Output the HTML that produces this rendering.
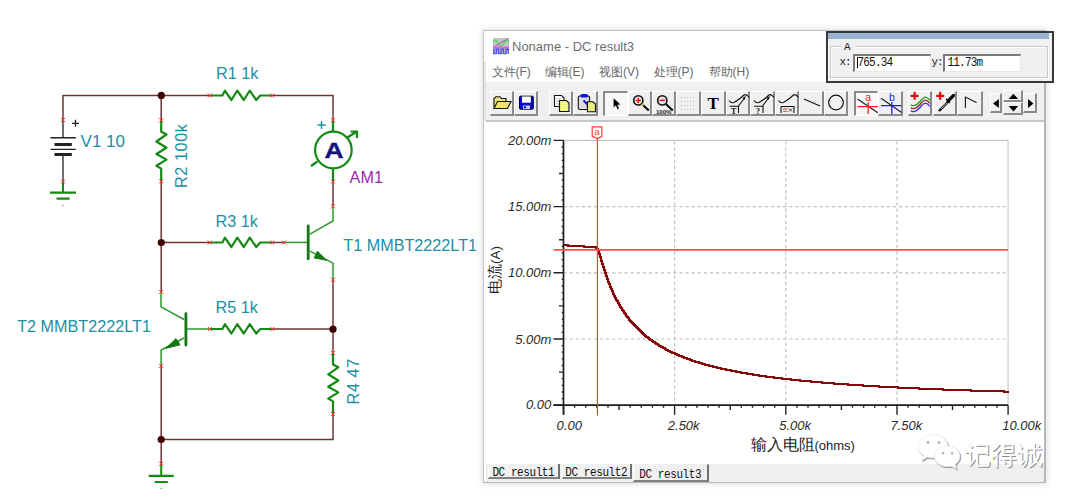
<!DOCTYPE html>
<html><head><meta charset="utf-8">
<style>
html,body{margin:0;padding:0;}
body{width:1080px;height:502px;background:#fff;position:relative;overflow:hidden;font-family:"Liberation Sans",sans-serif;}
.abs{position:absolute;}
svg{position:absolute;left:0;top:0;}
.lbl{font-family:"Liberation Sans",sans-serif;font-size:16.2px;fill:#1b8fa3;}
.btn{position:absolute;top:90.6px;height:25px;box-sizing:border-box;background:#f0f0f0;border-top:1px solid #fff;border-left:1px solid #fff;border-right:2px solid #8a8a8a;border-bottom:2px solid #8a8a8a;}
.btn.p{background:#f7f7f7;border-top:2px solid #8a8a8a;border-left:2px solid #8a8a8a;border-right:1px solid #fff;border-bottom:1px solid #fff;}
.menu{position:absolute;top:64px;font-size:12px;color:#686868;white-space:nowrap;}
.mono{font-family:"Liberation Mono",monospace;}
.tab{position:absolute;top:463.8px;height:15.5px;box-sizing:border-box;background:#f0f0f0;border-left:1px solid #fff;border-right:2px solid #707070;border-bottom:2px solid #808080;font-family:"Liberation Mono",monospace;font-size:11px;letter-spacing:-0.42px;color:#111;padding-left:3px;line-height:13px;padding-top:3.3px;white-space:nowrap;}
.tab span{display:inline-block;transform:scaleY(1.12);transform-origin:0 70%;}
.tab.sel{height:17.8px;padding-top:5.6px;padding-left:5px;border-top:none;border-top-right-radius:2px;}
.tb{position:absolute;top:53.7px;width:77.7px;height:18px;box-sizing:border-box;background:#fff;border-top:2px solid #7a7a7a;border-left:2px solid #7a7a7a;border-bottom:1px solid #e8e8e8;border-right:1px solid #e8e8e8;font-family:"Liberation Mono",monospace;font-size:11px;letter-spacing:-0.8px;color:#111;padding-left:2.5px;line-height:14px;}
.tb span{display:inline-block;transform:scaleY(1.12);transform-origin:0 70%;}
</style></head><body>

<!-- SCHEMATIC -->
<svg width="1080" height="502" viewBox="0 0 1080 502">
 <g fill="none" stroke="#6d3434" stroke-width="1.5">
  <path d="M63,120 L63,95.5 L209.7,95.5 M272.2,95.5 L333,95.5 L333,120.3"/>
  <path d="M161.2,95.5 L161.2,120.3 M161.2,181.3 L161.2,292 M161.2,242.5 L209.7,242.5"/>
  <path d="M272.2,242.5 L284.2,242.5"/>
  <path d="M333,181.5 L333,206.3 M333,279.7 L333,353.1 M272.2,329 L333,329"/>
  <path d="M333,414.1 L333,439.5 L161.2,439.5 M161.2,365.8 L161.2,464"/>
 </g>
 <!-- battery V1 -->
 <g stroke="#222" fill="none">
  <path d="M63,120 L63,138 M63,154 L63,181.5" stroke-width="1.3"/>
  <path d="M50.5,137.8 L75.8,137.8 M50.5,149.4 L75.8,149.4" stroke-width="1.4"/>
  <path d="M54.5,144.4 L71.8,144.4 M54.5,154.4 L71.8,154.4" stroke-width="3"/>
  <path d="M72,123.3 L79,123.3 M75.5,119.8 L75.5,126.8" stroke-width="1.3"/>
 </g>
 <!-- grounds -->
 <g stroke="#148a14" fill="none">
  <path d="M63,181.5 L63,192.7 M161.2,464 L161.2,475.8" stroke-width="2"/>
  <path d="M50,192.7 L76,192.7 M56.5,198.7 L69.7,198.7 M148.7,475.8 L173.8,475.8 M154.7,482 L167.8,482" stroke-width="2.2"/>
  <path d="M63,205 L63,206 M161.2,488 L161.2,489" stroke-width="1"/>
 </g>
 <!-- resistors -->
 <g fill="none" stroke="#148a14" stroke-width="2.2" stroke-linejoin="round">
  <path d="M209.7,95.5 L222.4,95.5 L224.9,90.7 L231.4,100.0 L237.3,90.7 L243.8,100.0 L249.8,90.7 L256.3,100.0 L260.2,95.5 L272.2,95.5"/>
  <path d="M209.7,242.5 L222.4,242.5 L224.9,237.7 L231.4,247.0 L237.3,237.7 L243.8,247.0 L249.8,237.7 L256.3,247.0 L260.2,242.5 L272.2,242.5"/>
  <path d="M209.7,329.0 L222.4,329.0 L224.9,324.2 L231.4,333.5 L237.3,324.2 L243.8,333.5 L249.8,324.2 L256.3,333.5 L260.2,329.0 L272.2,329.0"/>
  <path d="M161.2,120.3 L161.2,131.7 L166.5,134.5 L156.4,141.5 L166.5,147.7 L156.4,154.0 L166.5,159.6 L156.4,165.8 L161.2,168.6 L161.2,181.3"/>
  <path d="M333.0,353.1 L333.0,364.5 L338.3,367.3 L328.2,374.3 L338.3,380.5 L328.2,386.8 L338.3,392.4 L328.2,398.6 L333.0,401.4 L333.0,414.1"/>
 </g>
 <!-- ammeter -->
 <g fill="none" stroke="#148a14" stroke-width="2.2">
  <path d="M333,120.3 L333,131.5 M333,168.3 L333,181.5"/>
  <circle cx="333.4" cy="150" r="18.3"/>
  <path d="M346.5,138 L357,131.5 M350.5,131.5 L357,131.5 L357,138 M317.5,161.5 L311,166"/>
 </g>
 <text transform="translate(334,158.3) scale(1.2,1.02)" text-anchor="middle" style="font-family:'Liberation Sans',sans-serif;font-weight:bold;font-size:22px;fill:#141478;stroke:#141478;stroke-width:0.4px">A</text>
 <path d="M317.5,125 L325.5,125 M321.5,121 L321.5,129" stroke="#1b8fa3" stroke-width="1.4"/>
 <!-- transistor T1 -->
 <g fill="none" stroke="#2a9a2a" stroke-width="1.5">
  <path d="M284.2,242.4 L308,242.4"/>
  <path d="M333,206.3 L333,221 L309.9,234.2"/>
  <path d="M309.9,251.2 L333,263.2 L333,279.7"/>
 </g>
 <path d="M308.2,226 L308.2,258.8" stroke="#137813" stroke-width="2.8" stroke-linecap="round"/>
 <path d="M317.5,251.2 L314.2,257.9 L326.5,260.2 Z" fill="#137813" stroke="#137813" stroke-width="1"/>
 <!-- transistor T2 -->
 <g fill="none" stroke="#2a9a2a" stroke-width="1.5">
  <path d="M186,329 L209.8,329"/>
  <path d="M161,291.8 L161,306.9 L184.1,319.5"/>
  <path d="M184.1,338 L161.1,350 L161.1,365.8"/>
 </g>
 <path d="M185.9,313.7 L185.9,345.1" stroke="#137813" stroke-width="2.8" stroke-linecap="round"/>
 <path d="M176,338.6 L180,344.8 L165.8,348.4 Z" fill="#137813" stroke="#137813" stroke-width="1"/>
 <!-- junction dots -->
 <g fill="#3a0202">
  <circle cx="161.3" cy="95.4" r="3.6"/>
  <circle cx="161.3" cy="242.5" r="3.6"/>
  <circle cx="333" cy="329.2" r="3.6"/>
  <circle cx="161.2" cy="439.5" r="3.6"/>
 </g>
 <!-- red x marks -->
 <path stroke="#ff2a2a" stroke-width="1" d="M61.0,118.0 L65.0,122.0 M61.0,122.0 L65.0,118.0 M61.0,179.5 L65.0,183.5 M61.0,183.5 L65.0,179.5 M159.2,118.3 L163.2,122.3 M159.2,122.3 L163.2,118.3 M159.2,179.3 L163.2,183.3 M159.2,183.3 L163.2,179.3 M207.7,93.5 L211.7,97.5 M207.7,97.5 L211.7,93.5 M270.2,93.5 L274.2,97.5 M270.2,97.5 L274.2,93.5 M331.0,118.3 L335.0,122.3 M331.0,122.3 L335.0,118.3 M331.0,179.5 L335.0,183.5 M331.0,183.5 L335.0,179.5 M207.7,240.5 L211.7,244.5 M207.7,244.5 L211.7,240.5 M270.2,240.5 L274.2,244.5 M270.2,244.5 L274.2,240.5 M282.2,240.5 L286.2,244.5 M282.2,244.5 L286.2,240.5 M331.0,204.3 L335.0,208.3 M331.0,208.3 L335.0,204.3 M331.0,277.7 L335.0,281.7 M331.0,281.7 L335.0,277.7 M159.1,289.8 L163.1,293.8 M159.1,293.8 L163.1,289.8 M159.1,363.8 L163.1,367.8 M159.1,367.8 L163.1,363.8 M207.8,327.0 L211.8,331.0 M207.8,331.0 L211.8,327.0 M270.2,327.0 L274.2,331.0 M270.2,331.0 L274.2,327.0 M331.0,351.1 L335.0,355.1 M331.0,355.1 L335.0,351.1 M331.0,412.1 L335.0,416.1 M331.0,416.1 L335.0,412.1 M159.2,461.8 L163.2,465.8 M159.2,465.8 L163.2,461.8"/>
 <!-- labels -->
 <text class="lbl" x="80.6" y="146.7" style="font-size:17px">V1 10</text>
 <text class="lbl" x="216.1" y="79.4">R1 1k</text>
 <text class="lbl" x="215.5" y="226.8">R3 1k</text>
 <text class="lbl" x="215.5" y="312.7">R5 1k</text>
 <text class="lbl" x="343.3" y="250.8">T1 MMBT2222LT1</text>
 <text class="lbl" x="17.2" y="331.6">T2 MMBT2222LT1</text>
 <text class="lbl" x="349.6" y="182.6" style="fill:#9a2aa8">AM1</text>
 <text class="lbl" transform="translate(187.2,188) rotate(-90)" style="letter-spacing:0.6px">R2 100k</text>
 <text class="lbl" transform="translate(359.2,404.4) rotate(-90)" style="letter-spacing:0.6px">R4 47</text>
</svg>


<!-- WINDOW -->
<div class="abs" style="left:483px;top:30px;width:563px;height:453px;box-shadow:0 0 6px 1px rgba(0,0,0,0.13);"></div>
<div class="abs" style="left:483px;top:30px;width:563px;height:453px;box-sizing:border-box;border:1px solid #c2c2c2;border-right:2px solid #b8b8b8;border-bottom:1px solid #b8b8b8;background:#fff;"></div>
<div class="abs" style="left:484px;top:62px;width:2px;height:59px;background:#e6e6e6;"></div>
<!-- title icon -->
<svg width="1080" height="502" viewBox="0 0 1080 502" style="pointer-events:none">
 <rect x="493" y="38" width="16" height="16" fill="#c4c4c4"/>
 <path d="M493.3,41.8 Q495,38.8 497,41.5 Q499.5,46.5 501,45.8 Q503,45 505.5,41.5 Q507.5,39 508.8,42" fill="none" stroke="#5ada5a" stroke-width="1.5"/>
 <path d="M493.3,47 L508.7,38.3" fill="none" stroke="#a040b0" stroke-width="1.1" stroke-dasharray="1 0.6"/>
 <rect x="493" y="46.5" width="16" height="2" fill="#e060e0"/>
 <path d="M493.8,48.5 L493.8,53.6 L496.3,53.6 L496.3,49.2 L498.6,49.2 L498.6,53.6 L501.1,53.6 L501.1,49.2 L503.4,49.2 L503.4,53.6 L505.9,53.6 L505.9,49.2 L508.3,49.2 L508.3,53.6" fill="none" stroke="#5050f0" stroke-width="1.4"/>
</svg>
<div class="abs" style="left:512px;top:38.5px;font-size:13px;color:#6e6e6e;white-space:nowrap;">Noname - DC result3</div>
<!-- menu -->
<div class="menu" style="left:491.5px;">文件(F)</div>
<div class="menu" style="left:544.6px;">编辑(E)</div>
<div class="menu" style="left:599px;">视图(V)</div>
<div class="menu" style="left:653.5px;">处理(P)</div>
<div class="menu" style="left:708.5px;">帮助(H)</div>
<!-- toolbar -->
<div class="abs" style="left:486px;top:81px;width:558px;height:39px;background:#f0f0f0;border-top:1px solid #fafafa;box-sizing:border-box;"></div>
<div class="abs" style="left:486px;top:119.6px;width:558px;height:2.2px;background:#c6c6c6;"></div>
<!-- buttons -->
<div class="btn" style="left:489.5px;width:24.0px;"></div>
<div class="btn" style="left:513.5px;width:24.9px;"></div>
<div class="btn" style="left:549.2px;width:23.8px;"></div>
<div class="btn" style="left:573.0px;width:25.0px;"></div>
<div class="btn p" style="left:603.1px;width:24.5px;"></div>
<div class="btn" style="left:627.6px;width:24.0px;"></div>
<div class="btn" style="left:651.6px;width:24.4px;"></div>
<div class="btn" style="left:676.0px;width:24.8px;"></div>
<div class="btn" style="left:700.8px;width:25.0px;"></div>
<div class="btn" style="left:725.8px;width:24.5px;"></div>
<div class="btn" style="left:750.3px;width:24.4px;"></div>
<div class="btn" style="left:774.7px;width:24.5px;"></div>
<div class="btn" style="left:799.2px;width:24.5px;"></div>
<div class="btn" style="left:823.7px;width:24.3px;"></div>
<div class="btn p" style="left:853.7px;width:24.3px;"></div>
<div class="btn" style="left:878.0px;width:24.7px;"></div>
<div class="btn" style="left:908.2px;width:24.3px;"></div>
<div class="btn" style="left:932.5px;width:24.9px;"></div>
<div class="btn" style="left:957.4px;width:26.0px;"></div>
<div class="btn" style="left:989.7px;width:12.8px;top:93.4px;height:20px;"></div>
<div class="btn" style="left:1003.3px;width:19.6px;top:90.4px;height:12px;"></div>
<div class="btn" style="left:1003.3px;width:19.6px;top:102.2px;height:13.3px;"></div>
<div class="btn" style="left:1022.9px;width:14.2px;top:93.4px;height:20px;"></div>
<svg width="1080" height="502" viewBox="0 0 1080 502">
 <!-- open folder -->
 <path d="M494,107.5 L494,98.5 L496,96.8 L500,96.8 L501.5,98.5 L506,98.5 L506,101.5" fill="#f2e470" stroke="#111" stroke-width="1.1"/>
 <path d="M494,108.5 L497.5,101.5 L511,101.5 L507.5,108.5 Z" fill="#f2e66a" stroke="#111" stroke-width="1.1"/>
 <!-- save -->
 <rect x="519.5" y="96.2" width="13.8" height="13" rx="1" fill="#0a0ad0" stroke="#000" stroke-width="1"/>
 <rect x="522" y="96.5" width="8.8" height="6.2" fill="#fff"/>
 <rect x="523" y="105.5" width="7" height="3.6" fill="#c8c8ff"/>
 <rect x="524" y="106.3" width="2" height="2" fill="#0a0ad0"/>
 <!-- copy -->
 <path d="M554.5,95.5 L561.5,95.5 L564,98 L564,106.5 L554.5,106.5 Z" fill="#fff" stroke="#111" stroke-width="1.1"/>
 <path d="M556,99 L561,99 M556,101.5 L561,101.5 M556,104 L561,104" stroke="#aaa" stroke-width="0.8"/>
 <path d="M559.5,100.5 L566.5,100.5 L569,103 L569,111.5 L559.5,111.5 Z" fill="#eeee80" stroke="#111" stroke-width="1.1"/>
 <path d="M561,103.5 L567.5,103.5 M561,105.5 L567.5,105.5 M561,107.5 L567.5,107.5 M561,109.5 L567.5,109.5" stroke="#fff" stroke-width="0.7"/>
 <!-- paste -->
 <rect x="578.3" y="96" width="11.3" height="13.5" rx="1.5" fill="#dcdcdc" stroke="#111" stroke-width="1.1"/>
 <rect x="580.5" y="94" width="7.5" height="3.5" rx="1.5" fill="#1010f0"/>
 <path d="M583.5,100.5 L588.5,105.5" stroke="#1010c0" stroke-width="1.8"/>
 <path d="M586,107 L590,107 L590,103 Z" fill="#1010c0"/>
 <path d="M587.5,101.8 L593,101.8 L595.5,104 L595.5,111.8 L587.5,111.8 Z" fill="#eeee80" stroke="#111" stroke-width="1.1"/>
 <!-- arrow cursor -->
 <path d="M613.6,98.2 L613.6,107.5 L615.8,105.3 L617.6,109.2 L619,108.5 L617.3,104.7 L620.5,104.5 Z" fill="#000"/>
 <!-- zoom+ -->
 <circle cx="638.3" cy="100.4" r="4.6" fill="#e8e8e8" stroke="#111" stroke-width="1.6"/>
 <path d="M635.6,100.4 L641,100.4 M638.3,97.7 L638.3,103.1" stroke="#f01010" stroke-width="1.5"/>
 <path d="M641.8,104 L648.8,110.5" stroke="#111" stroke-width="2.2"/>
 <path d="M641.8,104 L643.3,105.4" stroke="#e0e030" stroke-width="2.2"/>
 <!-- zoom- -->
 <circle cx="662.3" cy="100.4" r="4.6" fill="#e8e8e8" stroke="#111" stroke-width="1.6"/>
 <path d="M659.6,100.4 L665,100.4" stroke="#f01010" stroke-width="1.5"/>
 <path d="M665.8,104 L672.8,110.5" stroke="#111" stroke-width="2.2"/>
 <text x="656" y="113.5" style="font-family:'Liberation Sans',sans-serif;font-size:6px;font-weight:bold;fill:#222">100%</text>
 <!-- grid dots -->
 <g fill="#c0c0c0">
  <rect x="681" y="97" width="1" height="1"/><rect x="684" y="97" width="1" height="1"/><rect x="687" y="97" width="1" height="1"/><rect x="690" y="97" width="1" height="1"/><rect x="693" y="97" width="1" height="1"/>
  <rect x="681" y="101" width="1" height="1"/><rect x="684" y="101" width="1" height="1"/><rect x="687" y="101" width="1" height="1"/><rect x="690" y="101" width="1" height="1"/><rect x="693" y="101" width="1" height="1"/>
  <rect x="681" y="105" width="1" height="1"/><rect x="684" y="105" width="1" height="1"/><rect x="687" y="105" width="1" height="1"/><rect x="690" y="105" width="1" height="1"/><rect x="693" y="105" width="1" height="1"/>
  <rect x="681" y="109" width="1" height="1"/><rect x="684" y="109" width="1" height="1"/><rect x="687" y="109" width="1" height="1"/><rect x="690" y="109" width="1" height="1"/><rect x="693" y="109" width="1" height="1"/>
 </g>
 <!-- T -->
 <text x="707.6" y="109.3" style="font-family:'Liberation Serif',serif;font-weight:bold;font-size:17px;fill:#000">T</text>
 <!-- curve T -->
 <g fill="none" stroke="#111" stroke-width="1.1">
  <path d="M729,100.5 Q731,103.5 734,102.5 Q740,99 744,95 Q746,93.5 749.5,97.5"/>
  <path d="M738.5,106 L745,97.5"/>
  <path d="M729.5,106.3 L738.5,106.3 L738.5,113"/>
  <path d="M754,100.5 Q756,103.5 759,102.5 Q765,99 769,95 Q771,93.5 774,97.5"/>
  <path d="M762.5,106 L769,97.5"/>
  <path d="M754,106.3 L763,106.3 L763,113"/>
  <path d="M778.5,100.5 Q780.5,103.5 783.5,102.5 Q789.5,99 793.5,95 Q795.5,93.5 798.5,97.5"/>
  <path d="M781,106.5 L794,106.5 L794,113 M781,106.5 L781,113"/>
 </g>
 <path d="M746,96 L742.5,98 L744.5,100 Z M770,96 L766.5,98 L768.5,100 Z" fill="#111"/>
 <text x="731" y="113.5" style="font-family:'Liberation Serif',serif;font-weight:bold;font-size:8px;fill:#111">T</text>
 <text x="756" y="113.5" style="font-family:'Liberation Serif',serif;font-weight:bold;font-size:8px;fill:#111">?</text>
 <path d="M783,109 L787.5,109" stroke="#d03030" stroke-width="1"/>
 <path d="M783,111.3 L787.5,111.3" stroke="#30a030" stroke-width="1"/>
 <path d="M789,108.5 L792,111.5 M792,108.5 L789,111.5" stroke="#111" stroke-width="0.8"/>
 <!-- line -->
 <path d="M804,99 L820,106" stroke="#111" stroke-width="1.2"/>
 <!-- circle -->
 <circle cx="836" cy="102.5" r="7.3" fill="none" stroke="#111" stroke-width="1.2"/>
 <!-- a cursor -->
 <path d="M857.5,99.1 L877.8,112.8" stroke="#222" stroke-width="1.2"/>
 <path d="M857.5,106.6 L877.8,106.6 M868.2,102.3 L868.2,114" stroke="#ff1a1a" stroke-width="1.3"/>
 <text x="868.2" y="100.9" text-anchor="middle" style="font-family:'Liberation Sans',sans-serif;font-size:10.5px;fill:#ff1a1a">a</text>
 <!-- b cursor -->
 <path d="M881.1,98.2 L901.7,112.5" stroke="#222" stroke-width="1.2"/>
 <path d="M881.1,105.6 L901.4,105.6 M891.8,102 L891.8,114" stroke="#1a1aff" stroke-width="1.3"/>
 <text x="892" y="100.9" text-anchor="middle" style="font-family:'Liberation Sans',sans-serif;font-size:10.5px;fill:#1a1aff">b</text>
 <!-- + curves -->
 <path d="M910.6,95.8 L918.6,95.8 M914.6,91.8 L914.6,99.8" stroke="#d80a0a" stroke-width="2.2"/>
 <g fill="none" stroke-width="1.3">
  <path d="M910.9,104.6 Q912,106 914,105.6 Q917,105 920,101.5 Q923.5,97 925.5,97.1 Q927.5,97.3 929.8,100.4" stroke="#1a9a1a"/>
  <path d="M910.9,107.6 Q912,109 914,108.6 Q917,108 920,104.5 Q923.5,100 925.5,100.1 Q927.5,100.3 929.8,103.4" stroke="#a02020"/>
  <path d="M910.9,110.6 Q912,112 914,111.6 Q917,111 920,107.5 Q923.5,103 925.5,103.1 Q927.5,103.3 929.8,106.4" stroke="#2a2aff"/>
 </g>
 <!-- + dropper -->
 <path d="M936.2,95.8 L944.2,95.8 M940.2,91.8 L940.2,99.8" stroke="#d80a0a" stroke-width="2.2"/>
 <path d="M939.6,110.3 L948.5,101.5" stroke="#111" stroke-width="2.4" stroke-linecap="round"/>
 <path d="M941,108.8 L947.5,102.5" stroke="#fff" stroke-width="0.7"/>
 <path d="M946.2,99 L950,102.8" stroke="#111" stroke-width="1.6"/>
 <path d="M948,101 L953.5,95.5" stroke="#111" stroke-width="3.2" stroke-linecap="round"/>
 <!-- flag -->
 <path d="M965.4,108 L965.4,97.1 L976.9,102.7" fill="none" stroke="#111" stroke-width="1.1"/>
 <path d="M976.9,102.9 L965.9,108" fill="none" stroke="#fff" stroke-width="1"/>
 <!-- arrows -->
 <path d="M998.9,98.9 L998.9,108 L993.1,103.5 Z" fill="#000"/>
 <path d="M1013.4,93.8 L1018.2,98.9 L1008.7,98.9 Z" fill="#000"/>
 <path d="M1013.4,111.4 L1018.2,106 L1008.7,106 Z" fill="#000"/>
 <path d="M1028,99 L1028,108 L1033.4,103.5 Z" fill="#000"/>
</svg>
<!-- plot -->
<svg width="1080" height="502" viewBox="0 0 1080 502">
<path d="M563.5,140.4 L1008.1,140.4 L1008.1,405.2" fill="none" stroke="#c6c6c6" stroke-width="1.1"/>
<path d="M674.6,141.4 L674.6,405.2 M785.8,141.4 L785.8,405.2 M897.0,141.4 L897.0,405.2 M563.5,339.0 L1008.1,339.0 M563.5,272.8 L1008.1,272.8 M563.5,206.6 L1008.1,206.6" fill="none" stroke="#c0c0c0" stroke-width="1.2" stroke-dasharray="3.2 2.9"/>
<path d="M553.5,405.2 L563.5,405.2 M559.0,372.1 L563.5,372.1 M553.5,339.0 L563.5,339.0 M559.0,305.9 L563.5,305.9 M553.5,272.8 L563.5,272.8 M559.0,239.7 L563.5,239.7 M553.5,206.6 L563.5,206.6 M559.0,173.5 L563.5,173.5 M553.5,140.4 L563.5,140.4 M563.5,405.2 L563.5,414.7 M574.6,405.2 L574.6,407.8 M585.7,405.2 L585.7,407.8 M596.8,405.2 L596.8,407.8 M608.0,405.2 L608.0,407.8 M619.1,405.2 L619.1,409.9 M630.2,405.2 L630.2,407.8 M641.3,405.2 L641.3,407.8 M652.4,405.2 L652.4,407.8 M663.5,405.2 L663.5,407.8 M674.6,405.2 L674.6,414.7 M685.8,405.2 L685.8,407.8 M696.9,405.2 L696.9,407.8 M708.0,405.2 L708.0,407.8 M719.1,405.2 L719.1,407.8 M730.2,405.2 L730.2,409.9 M741.3,405.2 L741.3,407.8 M752.5,405.2 L752.5,407.8 M763.6,405.2 L763.6,407.8 M774.7,405.2 L774.7,407.8 M785.8,405.2 L785.8,414.7 M796.9,405.2 L796.9,407.8 M808.0,405.2 L808.0,407.8 M819.1,405.2 L819.1,407.8 M830.3,405.2 L830.3,407.8 M841.4,405.2 L841.4,409.9 M852.5,405.2 L852.5,407.8 M863.6,405.2 L863.6,407.8 M874.7,405.2 L874.7,407.8 M885.8,405.2 L885.8,407.8 M897.0,405.2 L897.0,414.7 M908.1,405.2 L908.1,407.8 M919.2,405.2 L919.2,407.8 M930.3,405.2 L930.3,407.8 M941.4,405.2 L941.4,407.8 M952.5,405.2 L952.5,409.9 M963.6,405.2 L963.6,407.8 M974.8,405.2 L974.8,407.8 M985.9,405.2 L985.9,407.8 M997.0,405.2 L997.0,407.8 M1008.1,405.2 L1008.1,414.7" fill="none" stroke="#222" stroke-width="1.4"/>
<path d="M561.7,398.6 L563.5,398.6 M561.7,392.0 L563.5,392.0 M561.7,385.3 L563.5,385.3 M561.7,378.7 L563.5,378.7 M561.7,365.5 L563.5,365.5 M561.7,358.9 L563.5,358.9 M561.7,352.2 L563.5,352.2 M561.7,345.6 L563.5,345.6 M561.7,332.4 L563.5,332.4 M561.7,325.8 L563.5,325.8 M561.7,319.1 L563.5,319.1 M561.7,312.5 L563.5,312.5 M561.7,299.3 L563.5,299.3 M561.7,292.7 L563.5,292.7 M561.7,286.0 L563.5,286.0 M561.7,279.4 L563.5,279.4 M561.7,266.2 L563.5,266.2 M561.7,259.6 L563.5,259.6 M561.7,252.9 L563.5,252.9 M561.7,246.3 L563.5,246.3 M561.7,233.1 L563.5,233.1 M561.7,226.5 L563.5,226.5 M561.7,219.8 L563.5,219.8 M561.7,213.2 L563.5,213.2 M561.7,200.0 L563.5,200.0 M561.7,193.4 L563.5,193.4 M561.7,186.7 L563.5,186.7 M561.7,180.1 L563.5,180.1 M561.7,166.9 L563.5,166.9 M561.7,160.3 L563.5,160.3 M561.7,153.6 L563.5,153.6 M561.7,147.0 L563.5,147.0" fill="none" stroke="#222" stroke-width="1.3"/>
<path d="M563.5,140.4 L563.5,414.7 M553.5,405.2 L1008.1,405.2" fill="none" stroke="#1e1e1e" stroke-width="1.7"/>
 <path d="M564,245H565H566H567H568V246H569H570H571H572H573H574H575H576H577H578H579H580H581H582H583H584V247H585H586H587H588H589H590H591H592H593H594H595H596V248H597V249H598V251H599V254H600V257H601V261H602V264H603V267H604V270H605V273H606V276H607V279H608V282H609V284H610V287H611V289H612V291H613V294H614V296H615V298H616V300H617V301H618V303H619V305H620V307H621V308H622V310H623V311H624V313H625V314H626V316H627V317H628V318H629V320H630V321H631V322H632V323H633V324H634V325H635V326H636V327H637V328H638V329H639V330H640V331H641V332H642V333H643V334H644V335H645V336H646V337H647H648V338H649V339H650V340H651H652V341H653V342H654H655V343H656V344H657H658V345H659V346H660H661V347H662H663V348H664H665V349H666V350H667H668V351H669H670V352H671H672V353H673H674H675V354H676H677V355H678H679V356H680H681H682V357H683H684V358H685H686H687V359H688H689H690V360H691H692V361H693H694H695V362H696H697H698H699V363H700H701H702V364H703H704H705V365H706H707H708H709V366H710H711H712H713V367H714H715H716H717V368H718H719H720H721V369H722H723H724H725H726V370H727H728H729H730H731V371H732H733H734H735H736V372H737H738H739H740H741V373H742H743H744H745H746H747V374H748H749H750H751H752H753V375H754H755H756H757H758H759V376H760H761H762H763H764H765H766V377H767H768H769H770H771H772H773H774V378H775H776H777H778H779H780H781H782V379H783H784H785H786H787H788H789H790H791V380H792H793H794H795H796H797H798H799H800V381H801H802H803H804H805H806H807H808H809H810H811V382H812H813H814H815H816H817H818H819H820H821H822V383H823H824H825H826H827H828H829H830H831H832H833H834V384H835H836H837H838H839H840H841H842H843H844H845H846H847H848V385H849H850H851H852H853H854H855H856H857H858H859H860H861H862H863V386H864H865H866H867H868H869H870H871H872H873H874H875H876H877H878H879V387H880H881H882H883H884H885H886H887H888H889H890H891H892H893H894H895H896H897H898V388H899H900H901H902H903H904H905H906H907H908H909H910H911H912H913H914H915H916H917H918H919V389H920H921H922H923H924H925H926H927H928H929H930H931H932H933H934H935H936H937H938H939H940H941H942H943V390H944H945H946H947H948H949H950H951H952H953H954H955H956H957H958H959H960H961H962H963H964H965H966H967H968H969H970H971V391H972H973H974H975H976H977H978H979H980H981H982H983H984H985H986H987H988H989H990H991H992H993H994H995H996H997H998H999H1000H1001H1002H1003H1004V392H1005H1006H1007H1008H1009" fill="none" stroke="#860909" stroke-width="2.2" stroke-linejoin="miter"/>
 <!-- cursor -->
 <path d="M597.4,138.2 L597.4,415.5" fill="none" stroke="#ff3a3a" stroke-width="1.2"/><path d="M553.8,249.9 L1008.1,249.9" fill="none" stroke="#ff4c4c" stroke-width="1.6"/>
 <path d="M592.2,126.9 L601.8,126.9 L601.8,136.4 L597.4,138.6 L592.2,136.4 Z" fill="#fff" stroke="#ff3a3a" stroke-width="1.2"/>
 <text x="597" y="135.4" text-anchor="middle" style="font-family:'Liberation Sans',sans-serif;font-size:9.8px;fill:#ff3a3a">a</text>
</svg>
<!-- tab bar -->
<div class="abs" style="left:486px;top:464px;width:558px;height:18px;background:#efefef;"></div>

<!-- axis labels -->
<svg width="1080" height="502" viewBox="0 0 1080 502">
 <g style="font-family:'Liberation Sans',sans-serif;font-style:italic;font-size:13px;fill:#2b2b2b" text-anchor="end">
  <text x="551.3" y="144.9">20.00m</text>
  <text x="551.3" y="211.1">15.00m</text>
  <text x="551.3" y="277.4">10.00m</text>
  <text x="551.3" y="343.5">5.00m</text>
  <text x="551.3" y="409.3">0.00</text>
 </g>
 <g style="font-family:'Liberation Sans',sans-serif;font-style:italic;font-size:13px;fill:#2b2b2b">
  <text x="556.6" y="430.2">0.00</text>
  <text x="667.8" y="430.2">2.50k</text>
  <text x="779.2" y="430.2">5.00k</text>
  <text x="890.4" y="430.2">7.50k</text>
  <text x="1002.3" y="430.2">10.00k</text>
 </g>
 <text x="750.5" y="450.3" style="font-family:'Liberation Sans',sans-serif;font-size:16px;fill:#222;">输入电阻<tspan style="font-size:13px;letter-spacing:0">(ohms)</tspan></text>
 <text transform="translate(500.3,294) rotate(-90)" style="font-family:'Liberation Sans',sans-serif;font-size:15px;fill:#222">电流<tspan style="font-size:13.5px">(A)</tspan></text>
</svg>
<!-- tabs -->
<div class="tab" style="left:488.4px;width:71.2px;"><span>DC result1</span></div>
<div class="tab" style="left:561.8px;width:69.8px;padding-left:2.5px;"><span>DC result2</span></div>
<div class="tab sel" style="left:633.3px;width:75.6px;"><span>DC result3</span></div>
<!-- watermark -->
<svg width="1080" height="502" viewBox="0 0 1080 502">
 <defs>
  <path id="wb1" d="M933,434.8 C941.5,434.8 948,440 948,446.5 C948,452.8 941.5,458 933,458 C931,458 929,457.7 927.3,457.2 L922,460.5 L923.5,455.5 C920,453.3 918.2,450.2 918.2,446.5 C918.2,440 924.7,434.8 933,434.8 Z"/>
  <path id="wb2" d="M947.2,446 C954.3,446 960,450.6 960,456.2 C960,459.6 958,462.6 955,464.4 L956.5,469 L951.8,466.2 C950.4,466.5 948.8,466.6 947.2,466.6 C940.1,466.6 934.3,462 934.3,456.2 C934.3,450.6 940.1,446 947.2,446 Z"/>
 </defs>
 <g transform="translate(0.8,1)" fill="#9a9a9a" stroke="#9a9a9a" stroke-width="1"><use href="#wb1"/></g>
 <g fill="#fff" stroke="#e6e6e6" stroke-width="0.6"><use href="#wb1"/></g>
 <g transform="translate(0.8,1)" fill="#9a9a9a" stroke="#9a9a9a" stroke-width="1"><use href="#wb2"/></g>
 <g fill="#fff" stroke="#e6e6e6" stroke-width="0.6"><use href="#wb2"/></g>
 <g fill="#b0b0b0"><circle cx="928" cy="442.5" r="1.4"/><circle cx="939" cy="442.5" r="1.4"/><circle cx="943" cy="453.2" r="1.2"/><circle cx="952" cy="453.2" r="1.2"/></g>
 <text x="966.3" y="464.6" style="font-family:'Liberation Sans',sans-serif;font-size:26px;fill:#8c8c8c;">记得诚</text>
 <text x="965.3" y="463.6" style="font-family:'Liberation Sans',sans-serif;font-size:26px;fill:#fff;">记得诚</text>
</svg>
<!-- dialog -->
<div class="abs" style="left:826px;top:30.5px;width:228px;height:52.5px;box-sizing:border-box;border:2px solid #383838;background:#f0f0f0;box-shadow:inset 1px 1px 0 #fafafa;"></div>
<div class="abs" style="left:828.4px;top:33.4px;width:220.6px;height:5.8px;background:#99b4d1;"></div>
<div class="abs" style="left:830.4px;top:46px;width:217.6px;height:32px;box-sizing:border-box;border:1px solid #c8c8c8;box-shadow:inset 1px 1px 0 #fff, 1px 1px 0 #fff;"></div>
<div class="abs mono" style="left:842px;top:40.5px;width:12px;background:#f0f0f0;font-size:11px;color:#222;padding-left:2px;">A</div>
<div class="abs mono" style="left:839.5px;top:55.5px;font-size:11px;letter-spacing:-1px;color:#222;">x:</div>
<div class="abs mono" style="left:931.5px;top:55.5px;font-size:11px;letter-spacing:-1px;color:#222;">y:</div>
<div class="tb" style="left:853px;"><span>765.34</span></div>
<div class="tb" style="left:943px;"><span>11.73m</span></div>
<div class="abs" style="left:856.5px;top:57px;width:1px;height:11px;background:#000;"></div>

</body></html>
